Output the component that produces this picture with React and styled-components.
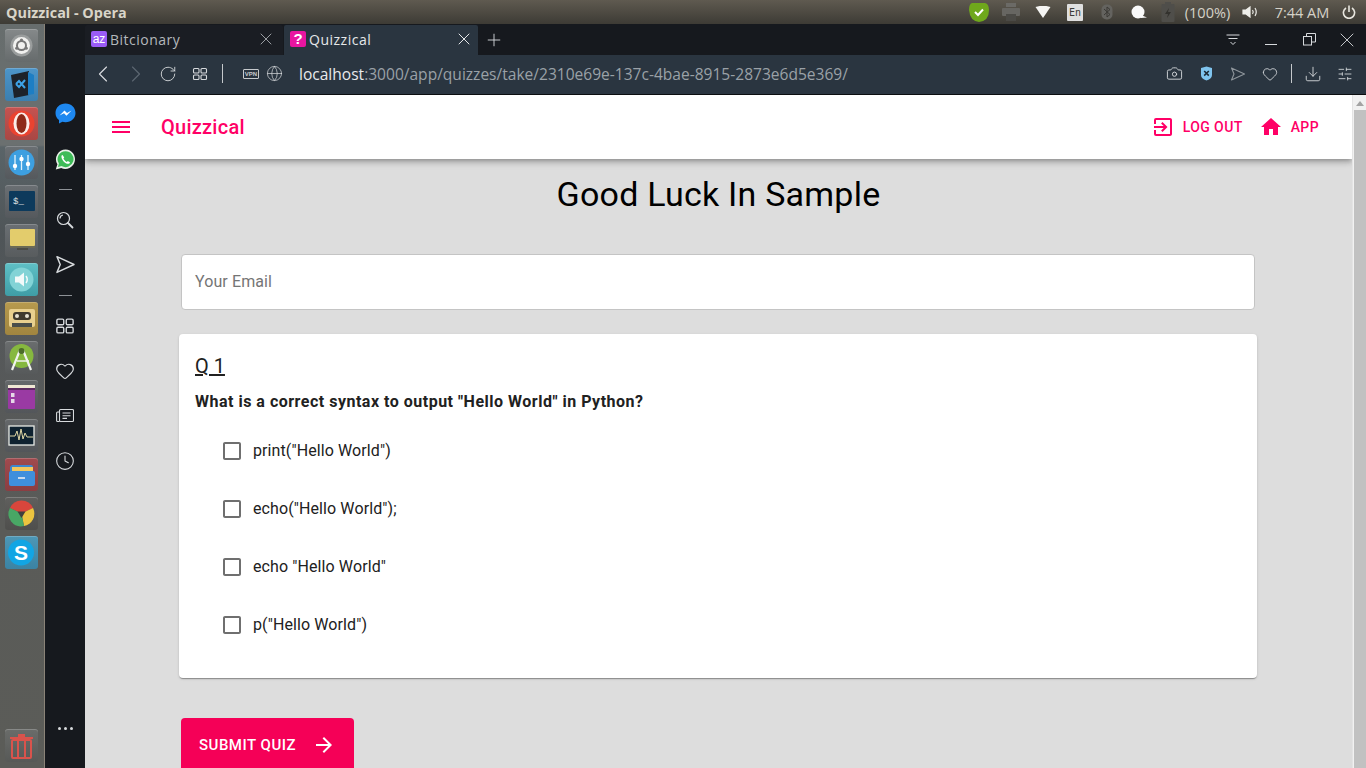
import React from "react";
import styled, { createGlobalStyle } from "styled-components";
import {
  MdMenu,
  MdExitToApp,
  MdHome,
  MdArrowForward,
  MdCheckBoxOutlineBlank,
} from "react-icons/md";
import {
  ChevronLeft,
  ChevronRight,
  RotateCw,
  Globe,
  Camera,
  Heart,
  Clock,
  X,
  Plus,
  Download,
  SlidersHorizontal,
} from "lucide-react";

const GlobalStyle = createGlobalStyle`
  html, body {
    margin: 0;
    padding: 0;
    overflow: hidden;
  }
  * {
    box-sizing: border-box;
  }
`;

const Screen = styled.div`
  width: 1366px;
  height: 768px;
  display: flex;
  flex-direction: column;
  overflow: hidden;
  font-family: Roboto, "Liberation Sans", sans-serif;
`;

/* ubuntu top panel */
const TopPanel = styled.div`
  height: 24px;
  flex: none;
  display: flex;
  align-items: center;
  padding: 0 6px;
  background: linear-gradient(to bottom, #5f5a50, #3d3b35);
`;

const WindowTitle = styled.div`
  flex: 1;
  font-family: "Open Sans", "DejaVu Sans", sans-serif;
  font-size: 14.4px;
  font-weight: 700;
  color: #d9d5c9;
`;

const Tray = styled.div`
  display: flex;
  align-items: center;
  height: 24px;
`;

const TraySlot = styled.div`
  width: ${(p) => p.$w || 32}px;
  height: 24px;
  flex: none;
  display: flex;
  align-items: center;
  justify-content: center;
`;

const TrayText = styled.span`
  font-family: "Open Sans", "DejaVu Sans", sans-serif;
  font-size: 14.5px;
  color: #d5d2c8;
  white-space: nowrap;
`;

const LangBadge = styled.span`
  width: 16px;
  height: 17px;
  background: #dfdfdf;
  border-radius: 1px;
  color: #3c3b37;
  font-family: "DejaVu Sans Mono", monospace;
  font-size: 10px;
  display: flex;
  align-items: center;
  justify-content: center;
`;

const Desktop = styled.div`
  flex: 1;
  display: flex;
  min-height: 0;
`;

/* launcher */
const Launcher = styled.div`
  width: 45px;
  flex: none;
  display: flex;
  flex-direction: column;
  gap: 6px;
  padding: 5px 0 6px 5px;
  border-right: 1px solid #8a8378;
  background: linear-gradient(
    to bottom,
    #676d6d 0,
    #6b7070 121px,
    #5a6468 123px,
    #4f5558 210px,
    #55585a 300px,
    #5a5b58 500px,
    #5b5c58 100%
  );
`;

const Tile = styled.div`
  width: 33px;
  height: 33px;
  flex: none;
  border-radius: 3px;
  background: ${(p) => p.$bg || "#6a6e70"};
  box-shadow: inset 0 1px 0 rgba(255, 255, 255, 0.2);
  display: flex;
  align-items: center;
  justify-content: center;
  overflow: hidden;
  ${(p) => p.$end && "margin-top: auto;"}
`;

const TileGlyph = styled.svg`
  width: 33px;
  height: 33px;
  display: block;
`;

/* opera sidebar */
const SideBar = styled.div`
  width: 40px;
  flex: none;
  background: #16191e;
  display: flex;
  flex-direction: column;
  align-items: center;
  padding-top: 67px;
  color: #d7dadd;
`;

const SideItem = styled.div`
  height: 45px;
  flex: none;
  display: flex;
  align-items: center;
  justify-content: center;
`;

const SideRule = styled.div`
  width: 13px;
  height: 1px;
  flex: none;
  margin: 8px 0 7px;
  background: #8d9196;
`;

const SideDots = styled.div`
  margin-top: auto;
  margin-bottom: 38px;
  display: flex;
  gap: 3px;
`;

const Dot = styled.span`
  width: 3px;
  height: 3px;
  border-radius: 50%;
  background: #d7dadd;
`;

/* browser */
const Browser = styled.div`
  flex: 1;
  min-width: 0;
  display: flex;
  flex-direction: column;
`;

const TabStrip = styled.div`
  height: 31px;
  flex: none;
  display: flex;
  align-items: flex-end;
  background: #16191e;
  color: #d7dadd;
`;

const Tab = styled.div`
  width: ${(p) => p.$w}px;
  height: 30px;
  margin-right: 1px;
  padding: 0 ${(p) => p.$pr}px 2px 6px;
  display: flex;
  align-items: center;
  gap: 3px;
  border-radius: 2px 2px 0 0;
  background: ${(p) => (p.$active ? "#2a3540" : "#1a1d23")};
  color: ${(p) => (p.$active ? "#e6e8ea" : "#b4b8bc")};
`;

const TabLabel = styled.span`
  flex: 1;
  font-family: "Open Sans", "DejaVu Sans", sans-serif;
  font-size: 14px;
  letter-spacing: 0.5px;
`;

const Favicon = styled.span`
  width: 16px;
  height: 16px;
  flex: none;
  border-radius: 2px;
  background: ${(p) => p.$bg};
  color: #fff;
  font-family: "Liberation Sans", sans-serif;
  font-size: ${(p) => p.$size || 13}px;
  font-weight: ${(p) => p.$weight || 400};
  line-height: 16px;
  text-align: center;
`;

const NewTab = styled.div`
  width: 30px;
  display: flex;
  justify-content: center;
  align-self: center;
`;

const WindowControls = styled.div`
  margin-left: auto;
  display: flex;
  align-items: center;
  align-self: center;
`;

const WindowButton = styled.div`
  width: 38px;
  height: 24px;
  display: flex;
  align-items: center;
  justify-content: center;
`;

const AddressBar = styled.div`
  height: 40px;
  flex: none;
  display: flex;
  align-items: center;
  padding: 0 0 2px 2px;
  background: #2a3540;
  border-bottom: 1px solid #0c0e10;
  color: #d7dadd;
`;

const BarSlot = styled.div`
  width: ${(p) => p.$w || 32}px;
  height: 32px;
  flex: none;
  display: flex;
  align-items: center;
  justify-content: center;
  color: ${(p) => p.$color || "inherit"};
`;

const BarRule = styled.div`
  width: 1px;
  height: 19px;
  flex: none;
  background: #c5c9cc;
`;

const UrlText = styled.div`
  flex: 1;
  margin-left: 10px;
  font-family: "Open Sans", "DejaVu Sans", sans-serif;
  font-size: 15.56px;
  color: #9aa1a7;
  white-space: nowrap;
`;

const UrlHost = styled.span`
  color: #e8eaec;
`;

const VpnBadge = styled.span`
  width: 16px;
  height: 10px;
  border: 1px solid #c6cacd;
  border-radius: 1px;
  color: #c6cacd;
  font-family: "Liberation Sans", sans-serif;
  font-size: 6px;
  font-weight: 700;
  line-height: 8px;
  text-align: center;
`;

const PageRow = styled.div`
  flex: 1;
  min-height: 0;
  display: flex;
`;

/* page */
const Page = styled.div`
  flex: 1;
  min-width: 0;
  display: flex;
  flex-direction: column;
  overflow: hidden;
  background: #dddddd;
`;

const Header = styled.header`
  height: 64px;
  flex: none;
  display: flex;
  align-items: center;
  padding: 0 25px 0 24px;
  background: #fff;
  color: #ff0066;
  box-shadow: 0 2px 4px -1px rgba(0, 0, 0, 0.2), 0 4px 5px 0 rgba(0, 0, 0, 0.14),
    0 1px 10px 0 rgba(0, 0, 0, 0.12);
  position: relative;
`;

const Brand = styled.div`
  flex: 1;
  margin-left: 28px;
  font-size: 20px;
  font-weight: 500;
  letter-spacing: 0.25px;
  line-height: 32px;
`;

const NavButton = styled.div`
  display: flex;
  align-items: center;
  gap: 8px;
  padding: 0 8px;
  font-size: 14px;
  font-weight: 500;
  letter-spacing: 0.4px;
`;

const Title = styled.h1`
  margin: 15px 0 0;
  text-align: center;
  font-size: 34px;
  font-weight: 400;
  letter-spacing: 0.22px;
  line-height: 40px;
  color: #000;
`;

const Body = styled.div`
  padding: 40px 95px 0 94px;
  display: flex;
  flex-direction: column;
`;

const EmailField = styled.div`
  height: 56px;
  margin: 0 2px 24px 2px;
  padding: 0 13px 2px;
  display: flex;
  align-items: center;
  background: #fff;
  border: 1px solid #c4c4c4;
  border-radius: 4px;
  font-size: 16px;
  letter-spacing: 0.1px;
  color: #757575;
`;

const Card = styled.section`
  height: 344px;
  padding: 16px;
  background: #fff;
  border-radius: 4px;
  box-shadow: 0 2px 1px -1px rgba(0, 0, 0, 0.2), 0 1px 1px 0 rgba(0, 0, 0, 0.14),
    0 1px 3px 0 rgba(0, 0, 0, 0.12);
`;

const QuestionNo = styled.div`
  font-size: 20px;
  line-height: 32px;
  color: #212121;
  text-decoration: underline;
  text-decoration-thickness: 2px;
`;

const QuestionText = styled.div`
  margin-top: 8px;
  font-size: 16px;
  font-weight: 700;
  letter-spacing: 0.5px;
  line-height: 24px;
  color: #212121;
`;

const Options = styled.div`
  margin: 7px 0 0 25px;
  display: flex;
  flex-direction: column;
`;

const Option = styled.label`
  height: 58px;
  display: flex;
  align-items: center;
  gap: 9px;
  font-size: 16px;
  letter-spacing: 0.1px;
  color: #212121;
`;

const CheckIcon = styled.span`
  display: flex;
  margin-top: 2px;
  color: #6f6f6f;
`;

const SubmitButton = styled.button`
  align-self: flex-start;
  width: 173px;
  height: 54px;
  flex: none;
  margin: 40px 0 0 2px;
  padding: 0 18px;
  display: flex;
  align-items: center;
  justify-content: space-between;
  border: 0;
  border-radius: 4px;
  background: #f50057;
  color: #fff;
  font-family: inherit;
  font-size: 15px;
  font-weight: 500;
  letter-spacing: 0.5px;
`;

const Scrollbar = styled.div`
  width: 14px;
  flex: none;
  display: flex;
  flex-direction: column;
  align-items: center;
  background: #f1f1f1;
  border-left: 1px solid #e4e4e4;
  padding-top: 6px;
`;

const ScrollArrow = styled.div`
  width: 0;
  height: 0;
  border-left: 4px solid transparent;
  border-right: 4px solid transparent;
  border-bottom: 5px solid #a3a3a3;
`;

const ScrollThumb = styled.div`
  width: 12px;
  flex: 1;
  margin-top: 4px;
  background: #c1c1c1;
`;

const GridGlyph = ({ size = 16 }) => (
  <svg width={size} height={size} viewBox="0 0 16 16" fill="none" stroke="currentColor" strokeWidth="1.1">
    <rect x="1.5" y="2.5" width="5.5" height="4.5" rx="1" />
    <rect x="9" y="2.5" width="5.5" height="4.5" rx="1" />
    <rect x="1.5" y="9" width="5.5" height="4.5" rx="1" />
    <rect x="9" y="9" width="5.5" height="4.5" rx="1" />
  </svg>
);

const SendGlyph = ({ size = 16 }) => (
  <svg width={size} height={size} viewBox="0 0 16 16" fill="none" stroke="currentColor" strokeWidth="1.1" strokeLinejoin="round">
    <path d="M1.5 2 L14.5 8 L1.5 14 L4 8 Z" />
  </svg>
);

const launcherTiles = [
  {
    bg: "linear-gradient(#85898a,#666b6c)",
    art: (
      <>
        <circle cx="16.5" cy="16.5" r="11" fill="#9a9d9d" />
        <circle cx="16.5" cy="16.5" r="8.5" fill="#f1f1ef" />
        <circle cx="16.5" cy="16.5" r="4.5" fill="none" stroke="#777" strokeWidth="2" />
        <circle cx="16.5" cy="11" r="1.6" fill="#777" />
        <circle cx="11.8" cy="19.2" r="1.6" fill="#777" />
        <circle cx="21.2" cy="19.2" r="1.6" fill="#777" />
      </>
    ),
  },
  {
    bg: "linear-gradient(#4d95c9,#3b7fb0)",
    art: (
      <>
        <path d="M6 7 L24 3 V27 L9 30 Z" fill="#1d2229" />
        <path d="M23 4 L29 7 V26 L23 27 Z" fill="#1d7ec4" />
        <path d="M11 16 L14 19 L20 12 M11 16 L14 13 L20 20" stroke="#3da2e6" strokeWidth="2" fill="none" />
      </>
    ),
  },
  {
    bg: "linear-gradient(#c65350,#a94744)",
    art: (
      <>
        <circle cx="16.5" cy="16.5" r="13" fill="#ea4330" />
        <ellipse cx="16.5" cy="16.5" rx="8" ry="11" fill="#fbeee9" />
        <ellipse cx="16.5" cy="16.5" rx="5" ry="9.5" fill="#8e2a18" />
      </>
    ),
  },
  {
    bg: "linear-gradient(#6a6f73,#55595d)",
    art: (
      <>
        <circle cx="16.5" cy="16.5" r="13" fill="#3d9fe0" />
        <path d="M10 9 V24 M16.5 9 V24 M23 9 V24" stroke="#dff1fb" strokeWidth="1.3" />
        <circle cx="10" cy="20" r="2.2" fill="#fff" />
        <circle cx="16.5" cy="13" r="2.2" fill="#fff" />
        <circle cx="23" cy="18" r="2.2" fill="#fff" />
      </>
    ),
  },
  {
    bg: "linear-gradient(#6a6f73,#55595d)",
    art: (
      <>
        <rect x="4" y="6" width="26" height="20" rx="1" fill="#0d3a5c" />
        <text x="8" y="19" fill="#e6e6e6" fontSize="9" fontFamily="Liberation Mono">$_</text>
      </>
    ),
  },
  {
    bg: "linear-gradient(#6a6f73,#585c5e)",
    art: (
      <>
        <rect x="5" y="5" width="25" height="17" rx="1" fill="#e3cc6c" />
        <rect x="5" y="22" width="25" height="2" fill="#6b6a55" />
        <rect x="12" y="24" width="11" height="2" fill="#4c4c46" />
      </>
    ),
  },
  {
    bg: "linear-gradient(#5fc0c6,#3f9da6)",
    art: (
      <>
        <circle cx="16.5" cy="16.5" r="12" fill="#82d3d6" />
        <path d="M10 13.5 H14 L19 9.5 V23.5 L14 19.5 H10 Z" fill="#f2fafa" />
        <path d="M21 13 Q23.5 16.5 21 20" stroke="#f2fafa" strokeWidth="1.5" fill="none" />
      </>
    ),
  },
  {
    bg: "linear-gradient(#b79a4e,#a1853f)",
    art: (
      <>
        <rect x="4" y="7" width="26" height="18" rx="2" fill="#e9d08e" />
        <rect x="8" y="10" width="18" height="8" rx="3" fill="#403a2e" />
        <circle cx="12" cy="14" r="2" fill="#e6e1d2" />
        <circle cx="22" cy="14" r="2" fill="#e6e1d2" />
        <rect x="7" y="21" width="20" height="4" fill="#4b4f4a" />
      </>
    ),
  },
  {
    bg: "linear-gradient(#6a6d6e,#575a5b)",
    art: (
      <>
        <circle cx="16.5" cy="15" r="12" fill="#86b83f" />
        <path d="M7 29 L15 9 M26 29 L18 9" stroke="#f1f3ee" strokeWidth="2.2" />
        <circle cx="16.5" cy="10" r="3" fill="#4d6d2a" />
        <path d="M12 20 H24" stroke="#f1f3ee" strokeWidth="1.6" />
      </>
    ),
  },
  {
    bg: "linear-gradient(#65686a,#53565a)",
    art: (
      <>
        <rect x="3" y="5" width="27" height="24" rx="1" fill="#9a3aa3" />
        <rect x="3" y="5" width="27" height="3" fill="#efe7d3" />
        <rect x="3" y="8" width="27" height="2" fill="#5c2a60" />
        <rect x="6" y="13" width="3.5" height="4" fill="#e6d8e8" />
        <rect x="6" y="19" width="3.5" height="4" fill="#e6d8e8" />
      </>
    ),
  },
  {
    bg: "linear-gradient(#65686a,#53565a)",
    art: (
      <>
        <rect x="4" y="7" width="25" height="19" fill="#0f2230" stroke="#e9ebe6" strokeWidth="1.3" />
        <path d="M5 17 H10 L12 12 L14 21 L16 10 L18 20 L20 14 L22 18 H28" stroke="#e0d7a4" strokeWidth="1" fill="none" />
      </>
    ),
  },
  {
    bg: "linear-gradient(#a04a4e,#8b3e42)",
    art: (
      <>
        <path d="M5 10 Q5 7 8 7 H26 Q28 7 28 10 V14 H5 Z" fill="#3d88cf" />
        <rect x="7" y="9" width="21" height="6" fill="#f3c65c" />
        <rect x="4" y="13" width="26" height="15" rx="2" fill="#3f8fdc" />
        <rect x="13" y="19" width="7" height="2" fill="#c7d9ec" />
      </>
    ),
  },
  {
    bg: "linear-gradient(#5f5f5d,#4f4f4d)",
    art: (
      <>
        <path d="M16.5 16.5 L5 11 A12.5 12.5 0 0 1 28 11 Z" fill="#d9463c" />
        <path d="M16.5 16.5 L28 11 A12.5 12.5 0 0 1 19 29 Z" fill="#ecc43f" />
        <path d="M16.5 16.5 L19 29 A12.5 12.5 0 0 1 5 11 Z" fill="#49a765" />
        <path d="M12.5 14.5 L20.5 14.5 L16.5 21 Z" fill="#3f3f3d" />
      </>
    ),
  },
  {
    bg: "linear-gradient(#4d97b6,#3b83a3)",
    art: (
      <>
        <circle cx="16" cy="16.5" r="13" fill="#12a5e4" />
        <text x="16" y="24" textAnchor="middle" fill="#fff" fontSize="21" fontWeight="700" fontFamily="Liberation Sans">S</text>
      </>
    ),
  },
];

const options = [
  'print("Hello World")',
  'echo("Hello World");',
  'echo "Hello World"',
  'p("Hello World")',
];

export default function App() {
  return (
    <Screen>
      <GlobalStyle />
      <TopPanel>
        <WindowTitle>Quizzical - Opera</WindowTitle>
        <Tray>
          <TraySlot>
            <svg width="22" height="22" viewBox="0 0 22 22">
              <path d="M4 2 H17 Q21 3 21 9 Q21 20 11 21 Q2 20 1 9 Q1 3 4 2 Z" fill="#6fa81c" />
              <path d="M7 11 L10 14 L15 8.5" stroke="#fff" strokeWidth="2" fill="none" />
            </svg>
          </TraySlot>
          <TraySlot>
            <svg width="20" height="20" viewBox="0 0 20 20">
              <rect x="5" y="1" width="10" height="4" fill="#6b6a66" />
              <rect x="1" y="6" width="18" height="8" rx="1" fill="#676662" />
              <rect x="5" y="12" width="10" height="7" fill="#4b4a46" />
            </svg>
          </TraySlot>
          <TraySlot>
            <svg width="16" height="12" viewBox="0 0 16 12">
              <path d="M0.5 1 Q8 -1.5 15.5 1 L8 12 Z" fill="#f5f5f3" />
            </svg>
          </TraySlot>
          <TraySlot>
            <LangBadge>En</LangBadge>
          </TraySlot>
          <TraySlot>
            <svg width="12" height="16" viewBox="0 0 12 16">
              <rect x="0.5" y="0.5" width="11" height="15" rx="5" fill="#64635f" />
              <path d="M3 5 L9 10.5 L6 13 V3 L9 5.5 L3 11" stroke="#3a3935" fill="none" />
            </svg>
          </TraySlot>
          <TraySlot>
            <svg width="17" height="14" viewBox="0 0 17 14">
              <circle cx="7" cy="7" r="6.5" fill="#fafafa" />
              <path d="M10 10 L16 12.5 L10 13 Z" fill="#fafafa" />
            </svg>
          </TraySlot>
          <TraySlot $w={26}>
            <svg width="14" height="20" viewBox="0 0 14 20">
              <rect x="0.5" y="2" width="13" height="18" rx="1" fill="#4f4e4a" />
              <rect x="4" y="0" width="6" height="2" fill="#4f4e4a" />
              <path d="M8 6 L4 12 H7 L6 16 L10 10 H7 Z" fill="#33322e" />
            </svg>
          </TraySlot>
          <TraySlot $w={53}>
            <TrayText>(100%)</TrayText>
          </TraySlot>
          <TraySlot>
            <svg width="17" height="12" viewBox="0 0 17 12" fill="none" stroke="#eeeeea" strokeWidth="1.2">
              <path d="M1 4 H4 L8 1 V11 L4 8 H1 Z" fill="#eeeeea" />
              <path d="M10.5 4 Q12 6 10.5 8 M13 2 Q15.5 6 13 10" />
            </svg>
          </TraySlot>
          <TraySlot $w={72}>
            <TrayText>7:44 AM</TrayText>
          </TraySlot>
          <TraySlot $w={22}>
            <svg width="14" height="14" viewBox="0 0 14 14" fill="none" stroke="#e8e6df" strokeWidth="1.6">
              <path d="M4 3 A5.6 5.6 0 1 0 10 3" />
              <path d="M7 0.5 V7" />
            </svg>
          </TraySlot>
        </Tray>
      </TopPanel>

      <Desktop>
        <Launcher>
          {launcherTiles.map((t, i) => (
            <Tile key={i} $bg={t.bg}>
              <TileGlyph viewBox="0 0 33 33">{t.art}</TileGlyph>
            </Tile>
          ))}
          <Tile $end $bg="linear-gradient(#6a6c6a,#575957)">
            <TileGlyph viewBox="0 0 33 33">
              <path d="M5 8 H28 V10 H5 Z M13 5 H20 V8 H13 Z" fill="#d9534c" />
              <rect x="7" y="11" width="19" height="18" rx="1" fill="none" stroke="#d9534c" strokeWidth="2" />
              <path d="M13 12 V28 M20 12 V28" stroke="#d9534c" strokeWidth="2" />
            </TileGlyph>
          </Tile>
        </Launcher>

        <SideBar>
          <SideItem>
            <svg width="21" height="21" viewBox="0 0 21 21">
              <path d="M10.5 0.5 C4.8 0.5 0.5 4.6 0.5 10 C0.5 13 1.8 15.4 4 17 V20.5 L7.4 18.7 C8.4 19 9.4 19.2 10.5 19.2 C16.2 19.2 20.5 15.2 20.5 10 C20.5 4.6 16.2 0.5 10.5 0.5 Z" fill="#1e88f0" />
              <path d="M4.5 12.5 L9.5 7.5 L12 10 L16.5 7.5 L11.5 12.8 L9 10.3 Z" fill="#fff" />
            </svg>
          </SideItem>
          <SideItem>
            <svg width="21" height="23" viewBox="0 -2 21 23">
              <path d="M10.7 0.5 A9.7 9.7 0 0 0 2.4 15.2 L0.8 20.4 L6.2 19 A9.7 9.7 0 1 0 10.7 0.5 Z" fill="#e8f0e8" />
              <path d="M10.7 2.2 A8 8 0 0 0 3.9 14.6 L3 18 L6.5 17.1 A8 8 0 1 0 10.7 2.2 Z" fill="#3ebc58" />
              <path d="M7.6 6 L6.6 6.6 C6 8.2 6.8 10.4 8.6 12.4 C10.6 14.4 12.8 15.2 14.4 14.4 L15 13.2 L12.8 12 L11.8 13 C10.6 12.6 9 11 8.4 9.6 L9.2 8.6 Z" fill="#fff" />
            </svg>
          </SideItem>
          <SideRule />
          <SideItem>
            <svg width="18" height="18" viewBox="0 0 18 18" fill="none" stroke="currentColor" strokeWidth="1.2">
              <circle cx="7.5" cy="7.5" r="6" />
              <path d="M4 7.5 A3.5 3.5 0 0 1 7 4" />
              <path d="M12 12 L16.5 16.5" strokeWidth="1.8" strokeLinecap="round" />
            </svg>
          </SideItem>
          <SideItem>
            <SendGlyph size={21} />
          </SideItem>
          <SideRule />
          <SideItem>
            <GridGlyph size={20} />
          </SideItem>
          <SideItem>
            <Heart size={20} strokeWidth={1.4} />
          </SideItem>
          <SideItem>
            <svg width="18" height="16" viewBox="0 0 18 16" fill="none" stroke="currentColor" strokeWidth="1.1">
              <rect x="3.5" y="1.5" width="14" height="12" rx="1" />
              <path d="M3.5 4 H1.5 Q0.6 4 0.6 5 V12.5 Q0.6 13.5 1.5 13.5 H3.5" />
              <path d="M6.5 5 H14.5 M6.5 7.7 H14.5 M6.5 10.4 H11" />
            </svg>
          </SideItem>
          <SideItem>
            <Clock size={20} strokeWidth={1.3} />
          </SideItem>
          <SideDots>
            <Dot />
            <Dot />
            <Dot />
          </SideDots>
        </SideBar>

        <Browser>
          <TabStrip>
            <Tab $w={198} $pr={7}>
              <Favicon $bg="#9b5cf6" $size={12}>az</Favicon>
              <TabLabel>Bitcionary</TabLabel>
              <X size={20} strokeWidth={1} />
            </Tab>
            <Tab $w={194} $active $pr={4}>
              <Favicon $bg="#e815a0" $size={15} $weight={700}>?</Favicon>
              <TabLabel>Quizzical</TabLabel>
              <X size={20} strokeWidth={1.2} />
            </Tab>
            <NewTab>
              <Plus size={20} strokeWidth={1.1} />
            </NewTab>
            <WindowControls>
              <WindowButton>
                <svg width="14" height="12" viewBox="0 0 14 12" fill="none" stroke="currentColor" strokeWidth="1">
                  <path d="M0.5 1 H13.5 M2.5 4.5 H11.5 M4.5 8 L7 10.5 L9.5 8" />
                </svg>
              </WindowButton>
              <WindowButton>
                <svg width="12" height="12" viewBox="0 0 12 12" stroke="currentColor" strokeWidth="1">
                  <path d="M0 10.5 H12" />
                </svg>
              </WindowButton>
              <WindowButton>
                <svg width="13" height="13" viewBox="0 0 13 13" fill="none" stroke="currentColor" strokeWidth="1">
                  <rect x="0.5" y="3.5" width="8" height="8.5" />
                  <path d="M3.5 3.5 V0.5 H12.5 V9 H8.5" />
                </svg>
              </WindowButton>
              <WindowButton>
                <X size={24} strokeWidth={0.9} />
              </WindowButton>
            </WindowControls>
          </TabStrip>

          <AddressBar>
            <BarSlot>
              <ChevronLeft size={28} strokeWidth={1} />
            </BarSlot>
            <BarSlot $w={33} $color="#5c6670">
              <ChevronRight size={28} strokeWidth={1} />
            </BarSlot>
            <BarSlot>
              <RotateCw size={18} strokeWidth={1.2} />
            </BarSlot>
            <BarSlot>
              <GridGlyph size={16} />
            </BarSlot>
            <BarSlot $w={6} />
            <BarRule />
            <BarSlot $w={20} />
            <BarSlot $w={16}>
              <VpnBadge>VPN</VpnBadge>
            </BarSlot>
            <BarSlot $w={30}>
              <Globe size={17} strokeWidth={1} />
            </BarSlot>
            <UrlText>
              <UrlHost>localhost</UrlHost>:3000/app/quizzes/take/2310e69e-137c-4bae-8915-2873e6d5e369/
            </UrlText>
            <BarSlot>
              <Camera size={17} strokeWidth={1.3} />
            </BarSlot>
            <BarSlot>
              <svg width="13" height="15" viewBox="0 0 13 15">
                <path d="M1 2 L6.5 0.5 L12 2 V9 Q12 12.5 6.5 14.5 Q1 12.5 1 9 Z" fill="#7fc4ee" />
                <path d="M4.2 5 L8.8 9.6 M8.8 5 L4.2 9.6" stroke="#1d2a36" strokeWidth="1.6" />
              </svg>
            </BarSlot>
            <BarSlot $color="#8e959b">
              <SendGlyph size={16} />
            </BarSlot>
            <BarSlot>
              <Heart size={16} strokeWidth={1.3} />
            </BarSlot>
            <BarSlot $w={5} />
            <BarRule />
            <BarSlot $w={10} />
            <BarSlot $w={21}>
              <Download size={18} strokeWidth={1.2} />
            </BarSlot>
            <BarSlot $w={43}>
              <SlidersHorizontal size={16} strokeWidth={1.3} />
            </BarSlot>
          </AddressBar>

          <PageRow>
            <Page>
              <Header>
                <MdMenu size={24} />
                <Brand>Quizzical</Brand>
                <NavButton>
                  <MdExitToApp size={24} />
                  LOG OUT
                </NavButton>
                <NavButton>
                  <MdHome size={24} />
                  APP
                </NavButton>
              </Header>
              <Title>Good Luck In Sample</Title>
              <Body>
                <EmailField>Your Email</EmailField>
                <Card>
                  <QuestionNo>Q 1</QuestionNo>
                  <QuestionText>
                    What is a correct syntax to output "Hello World" in Python?
                  </QuestionText>
                  <Options>
                    {options.map((o) => (
                      <Option key={o}>
                        <CheckIcon>
                          <MdCheckBoxOutlineBlank size={24} />
                        </CheckIcon>
                        {o}
                      </Option>
                    ))}
                  </Options>
                </Card>
                <SubmitButton>
                  SUBMIT QUIZ
                  <MdArrowForward size={24} />
                </SubmitButton>
              </Body>
            </Page>
            <Scrollbar>
              <ScrollArrow />
              <ScrollThumb />
            </Scrollbar>
          </PageRow>
        </Browser>
      </Desktop>
    </Screen>
  );
}
